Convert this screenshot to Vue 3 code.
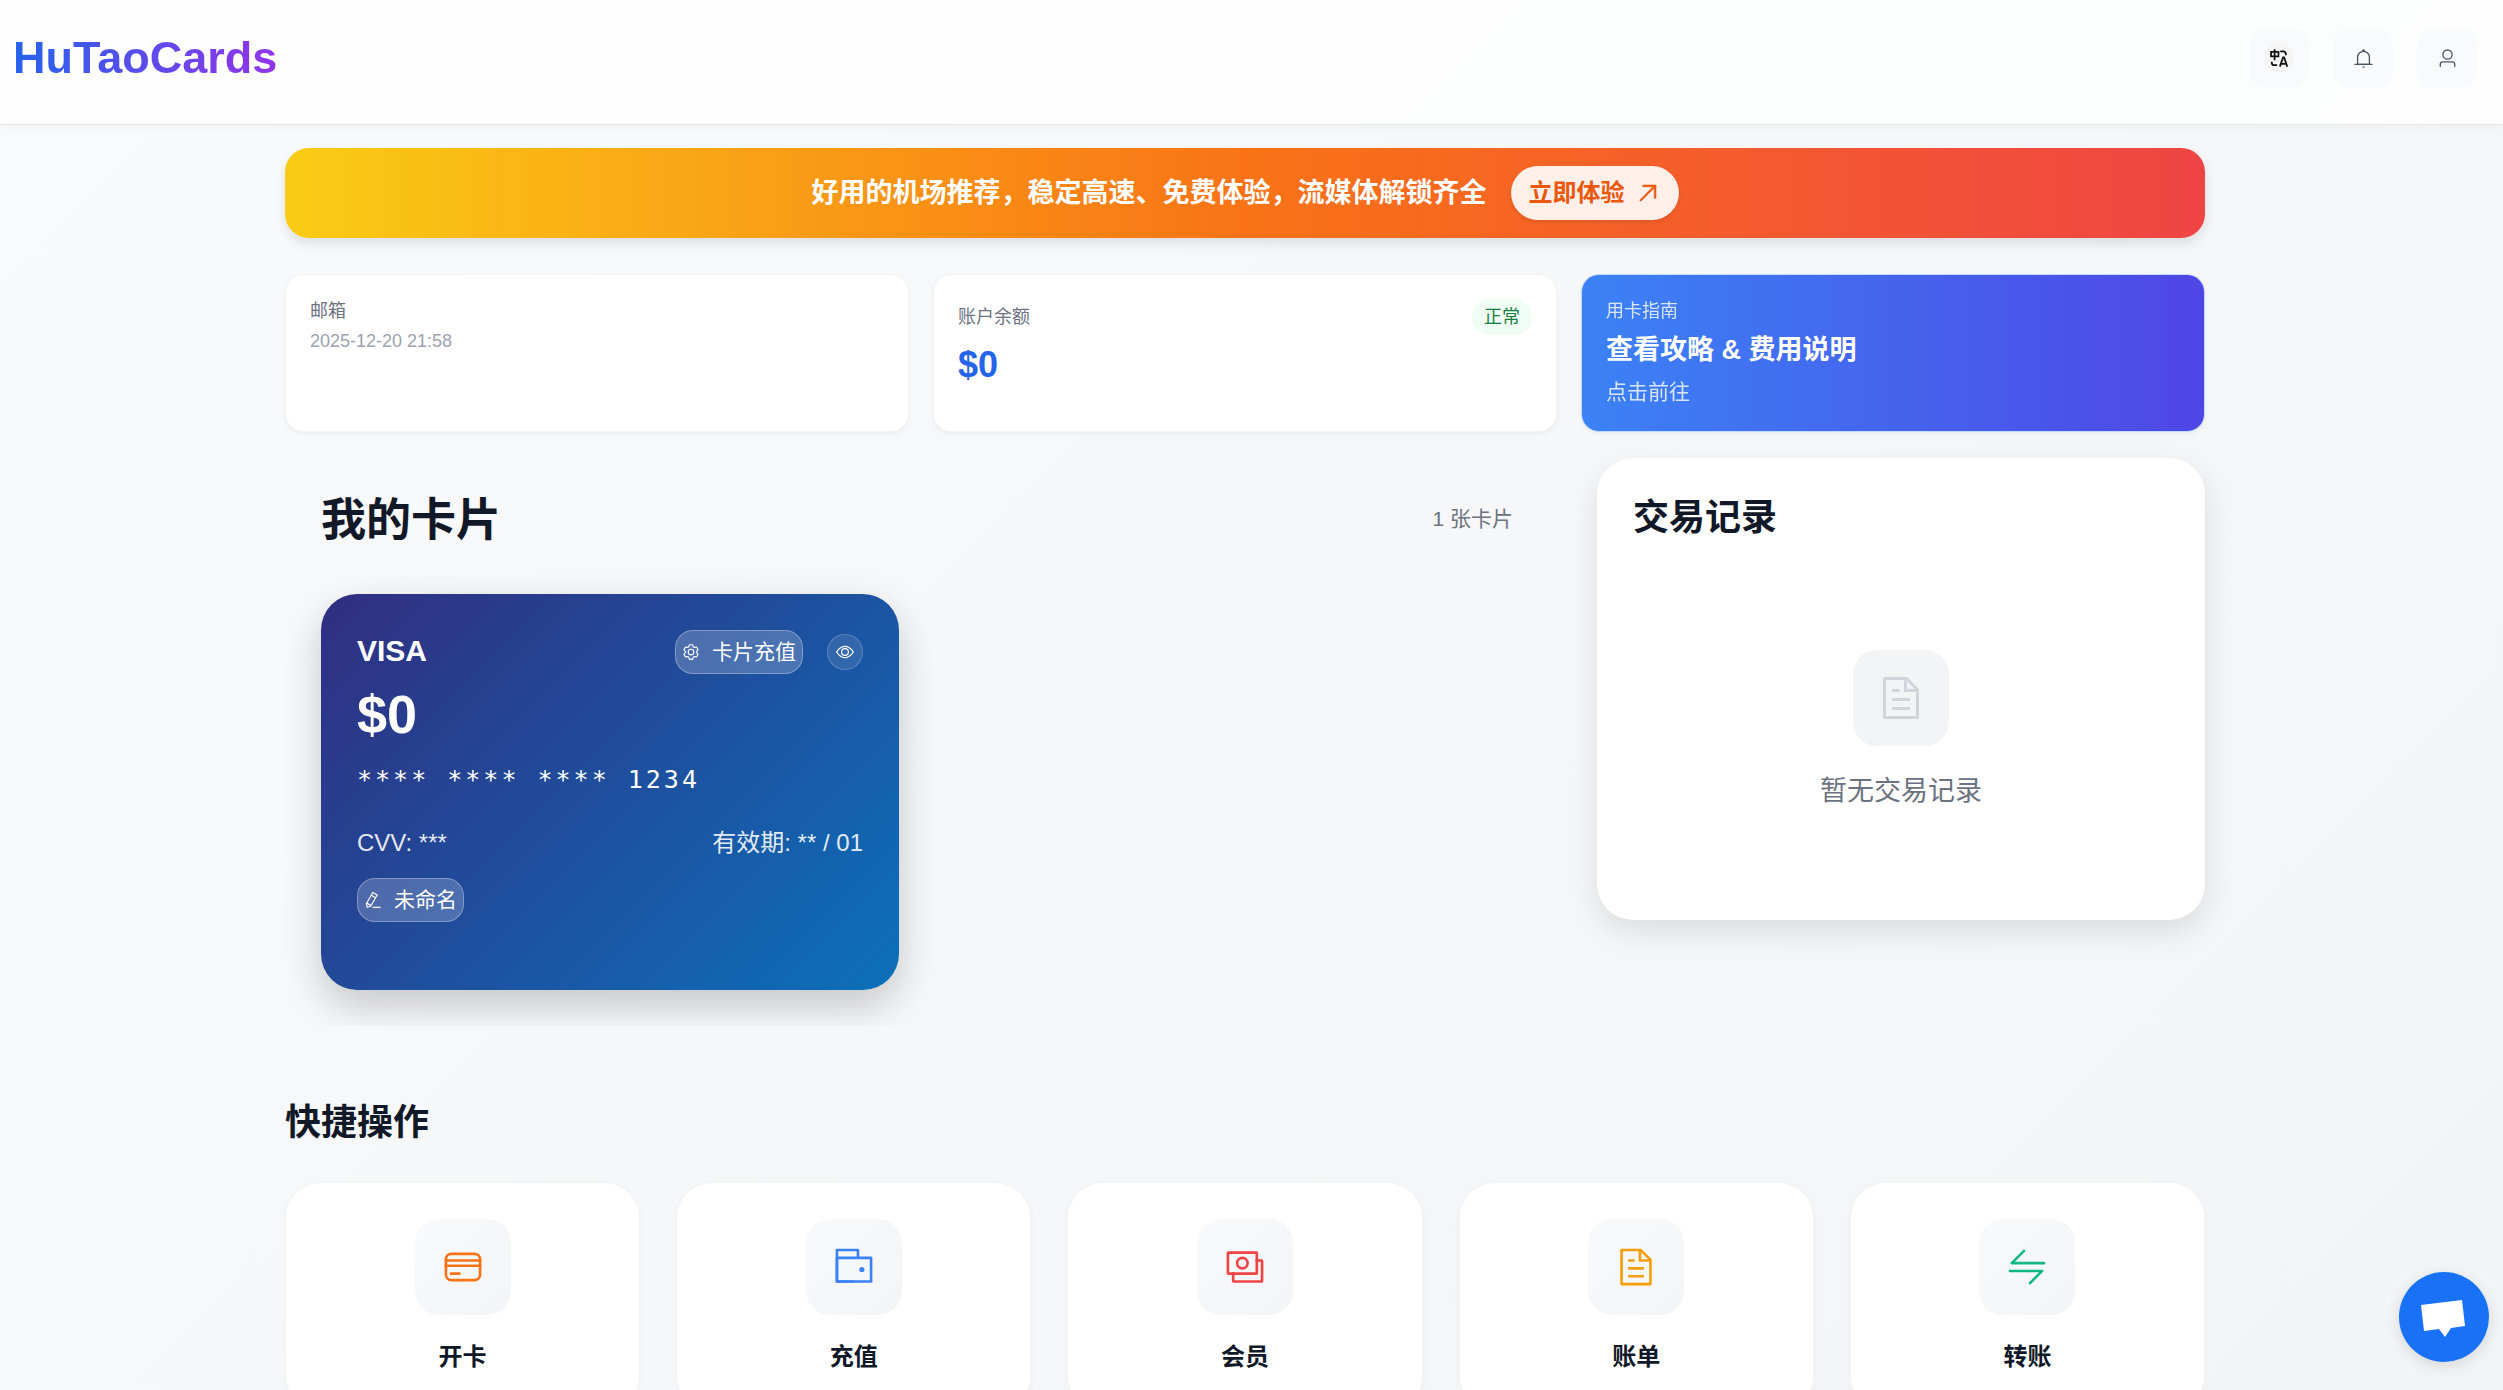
<script setup>
/**
 * App.vue
 * Card dashboard: top bar, promo banner, account summary, cards and quick actions.
 */

const card = {
  brand: 'VISA',
  balance: '$0',
  number: '**** **** **** 1234',
  cvv: '***',
  expiry: '** / 01'
}

const documentIcon = ['M832 384H576V128H192v768h640V384zm-26.496-64L640 154.496V320h165.504zM160 64h480l256 256v608a32 32 0 0 1-32 32H160a32 32 0 0 1-32-32V96a32 32 0 0 1 32-32zm160 448h384v64H320v-64zm0-192h160v64H320v-64zm0 384h384v64H320v-64z']

const actions = [
  {
    label: '开卡',
    color: '#f97316',
    paths: [
      'M228 160h568a164 164 0 0 1 164 164v376a164 164 0 0 1-164 164H228A164 164 0 0 1 64 700V324a164 164 0 0 1 164-164zm0 64a100 100 0 0 0-100 100v376a100 100 0 0 0 100 100h568a100 100 0 0 0 100-100V324a100 100 0 0 0-100-100H228z',
      'M64 320h896v64H64v-64zm0 128h896v64H64v-64zm128 192h256v64H192v-64z'
    ]
  },
  {
    label: '充值',
    color: '#3b82f6',
    paths: [
      'M640 288h-64V128H128v704h384v32a32 32 0 0 0 32 32H96a32 32 0 0 1-32-32V96a32 32 0 0 1 32-32h512a32 32 0 0 1 32 32v192z',
      'M128 320v512h768V320H128zm-32-64h832a32 32 0 0 1 32 32v576a32 32 0 0 1-32 32H96a32 32 0 0 1-32-32V288a32 32 0 0 1 32-32z',
      'M704 640a64 64 0 1 1 0-128 64 64 0 0 1 0 128z'
    ]
  },
  {
    label: '会员',
    color: '#ef4444',
    paths: [
      'M256 640v192h640V384H768v-64h152a40 40 0 0 1 40 40v496a40 40 0 0 1-40 40H232a40 40 0 0 1-40-40V640h64z',
      'M768 192H128v448h640V192zm64-24v496a40 40 0 0 1-40 40H104a40 40 0 0 1-40-40V168a40 40 0 0 1 40-40h688a40 40 0 0 1 40 40z',
      'M448 576a160 160 0 1 1 0-320 160 160 0 0 1 0 320zm0-64a96 96 0 1 0 0-192 96 96 0 0 0 0 192z'
    ]
  },
  { label: '账单', color: '#f59e0b', paths: documentIcon },
  {
    label: '转账',
    color: '#10b981',
    paths: ['M118.656 438.656a32 32 0 0 1 0-45.248L416 96l4.48-3.776A32 32 0 0 1 461.248 96l3.712 4.48a32.064 32.064 0 0 1-3.712 40.832L218.56 384H928a32 32 0 1 1 0 64H141.248a32 32 0 0 1-22.592-9.344zM64 608a32 32 0 0 1 32-32h786.752a32 32 0 0 1 22.656 54.592L608 928l-4.48 3.776a32.064 32.064 0 0 1-40.832-49.024L805.632 640H96a32 32 0 0 1-32-32z']
  }
]
</script>

<template>
  <div class="page">
    <!-- Top bar -->
    <header class="topbar">
      <a class="logo" href="#">HuTaoCards</a>
      <nav class="topbar-actions">
        <button class="icon-btn" type="button" aria-label="语言">
          <span class="lang-dot">
            <svg class="lang-icon" viewBox="0 0 51 51" fill="none" stroke="currentColor" stroke-width="5">
              <path d="M3 8h21v13H3zM13 1v31M29 7h8a8 8 0 0 1 8 8v3M5 36v3a7 7 0 0 0 7 7h8" />
              <path d="M28 50l9-26h3l9 26M32 42h13" />
            </svg>
          </span>
        </button>
        <button class="icon-btn" type="button" aria-label="通知">
          <svg class="icon-md" viewBox="0 0 1024 1024" fill="currentColor">
            <path d="M512 64a64 64 0 0 1 64 64v64H448v-64a64 64 0 0 1 64-64z" />
            <path d="M256 768h512V448a256 256 0 1 0-512 0v320zm256-640a320 320 0 0 1 320 320v384H192V448a320 320 0 0 1 320-320z" />
            <path d="M96 768h832q32 0 32 32t-32 32H96q-32 0-32-32t32-32zm352 128h128a64 64 0 0 1-128 0z" />
          </svg>
        </button>
        <button class="icon-btn" type="button" aria-label="用户">
          <svg class="icon-md" viewBox="0 0 1024 1024" fill="currentColor">
            <path d="M512 512a192 192 0 1 0 0-384 192 192 0 0 0 0 384zm0 64a256 256 0 1 1 0-512 256 256 0 0 1 0 512zm320 320v-96a96 96 0 0 0-96-96H288a96 96 0 0 0-96 96v96a32 32 0 1 1-64 0v-96a160 160 0 0 1 160-160h448a160 160 0 0 1 160 160v96a32 32 0 1 1-64 0z" />
          </svg>
        </button>
      </nav>
    </header>

    <main class="content">
      <div class="container">
        <!-- Promo banner -->
        <section class="banner">
          <span class="banner-text">好用的机场推荐，稳定高速、免费体验，流媒体解锁齐全</span>
          <a class="banner-btn" href="#">
            立即体验
            <svg class="icon-lg" viewBox="0 0 1024 1024" fill="currentColor" stroke="currentColor" stroke-width="24">
              <path d="M768 256H353.6a32 32 0 1 1 0-64H800a32 32 0 0 1 32 32v448a32 32 0 0 1-64 0V256z" />
              <path d="M777.344 201.344a32 32 0 0 1 45.312 45.312l-544 544a32 32 0 0 1-45.312-45.312l544-544z" />
            </svg>
          </a>
        </section>

        <!-- Account summary -->
        <section class="summary">
          <div class="summary-card">
            <div class="summary-label">邮箱</div>
            <div class="summary-date">2025-12-20 21:58</div>
          </div>
          <div class="summary-card">
            <div class="summary-head">
              <span class="summary-label">账户余额</span>
              <span class="status">正常</span>
            </div>
            <div class="summary-balance">$0</div>
          </div>
          <a class="summary-card guide" href="#">
            <span class="guide-label">用卡指南</span>
            <span class="guide-title">查看攻略 &amp; 费用说明</span>
            <span class="guide-link">点击前往</span>
          </a>
        </section>

        <div class="columns">
          <!-- My cards -->
          <section class="my-cards">
            <div class="my-cards-head">
              <h1>我的卡片</h1>
              <span class="card-count">1 张卡片</span>
            </div>
            <div class="card-strip">
              <article class="bank-card">
                <div class="bank-row">
                  <span class="brand">{{ card.brand }}</span>
                  <div class="bank-tools">
                    <button class="pill" type="button">
                      <svg class="icon-sm" viewBox="0 0 1024 1024" fill="currentColor">
                        <path d="M600.704 64a32 32 0 0 1 30.464 22.208l35.2 109.376c14.784 7.232 28.928 15.36 42.432 24.512l112.384-24.192a32 32 0 0 1 34.432 15.36L944.32 364.8a32 32 0 0 1-4.032 37.504l-77.12 85.12a357.12 357.12 0 0 1 0 49.024l77.12 85.248a32 32 0 0 1 4.032 37.504l-88.704 153.6a32 32 0 0 1-34.432 15.296L708.8 803.904c-13.44 9.088-27.648 17.28-42.368 24.512l-35.264 109.376A32 32 0 0 1 600.704 960H423.296a32 32 0 0 1-30.464-22.208L357.696 828.48a351.616 351.616 0 0 1-42.56-24.64l-112.32 24.256a32 32 0 0 1-34.432-15.36L79.68 659.2a32 32 0 0 1 4.032-37.504l77.12-85.248a357.12 357.12 0 0 1 0-48.896l-77.12-85.248A32 32 0 0 1 79.68 364.8l88.704-153.6a32 32 0 0 1 34.432-15.296l112.32 24.256c13.568-9.152 27.776-17.408 42.56-24.64l35.2-109.312A32 32 0 0 1 423.232 64H600.64zm-23.424 64H446.72l-36.352 113.088-24.512 11.968a294.113 294.113 0 0 0-34.816 20.096l-22.656 15.36-116.224-25.088-65.28 113.152 79.68 88.192-1.92 27.136a293.12 293.12 0 0 0 0 40.192l1.92 27.136-79.808 88.192 65.344 113.152 116.224-25.024 22.656 15.296a294.113 294.113 0 0 0 34.816 20.096l24.512 11.968L446.72 896h130.688l36.48-113.152 24.448-11.904a288.282 288.282 0 0 0 34.752-20.096l22.592-15.296 116.288 25.024 65.28-113.152-79.744-88.192 1.92-27.136a293.12 293.12 0 0 0 0-40.256l-1.92-27.136 79.808-88.128-65.344-113.152-116.288 24.96-22.592-15.232a287.616 287.616 0 0 0-34.752-20.096l-24.448-11.904L577.344 128zM512 320a192 192 0 1 1 0 384 192 192 0 0 1 0-384zm0 64a128 128 0 1 0 0 256 128 128 0 0 0 0-256z" />
                      </svg>
                      卡片充值
                    </button>
                    <button class="eye-btn" type="button" aria-label="显示卡号">
                      <svg class="icon-sm" viewBox="0 0 1024 1024" fill="currentColor">
                        <path d="M512 160c320 0 512 352 512 352S832 864 512 864 0 512 0 512s192-352 512-352zm0 64c-225.28 0-384.128 208.064-436.8 288 52.608 79.872 211.456 288 436.8 288 225.28 0 384.128-208.064 436.8-288-52.608-79.872-211.456-288-436.8-288zm0 64a224 224 0 1 1 0 448 224 224 0 0 1 0-448zm0 64a160.192 160.192 0 0 0-160 160c0 88.192 71.744 160 160 160s160-71.808 160-160-71.744-160-160-160z" />
                      </svg>
                    </button>
                  </div>
                </div>
                <div class="bank-balance">{{ card.balance }}</div>
                <div class="bank-number">{{ card.number }}</div>
                <div class="bank-row bank-meta">
                  <span>CVV: {{ card.cvv }}</span>
                  <span>有效期: {{ card.expiry }}</span>
                </div>
                <button class="pill" type="button">
                  <svg class="icon-sm" viewBox="0 0 1024 1024" fill="currentColor">
                    <path d="m199.04 672.64 193.984 112 224-387.968-193.92-112-224 388.032zm-23.872 60.16 32.896 148.288 144.896-45.696L175.168 732.8zM455.04 229.248l193.92 112 56.704-98.112-193.984-112-56.64 98.112zM104.32 708.8l384-665.024 304.768 175.936L409.152 884.8h.064l-248.448 78.336L104.32 708.8zm384 254.272v-64h448v64h-448z" />
                  </svg>
                  未命名
                </button>
              </article>
            </div>
          </section>

          <!-- Transactions -->
          <section class="records">
            <h2>交易记录</h2>
            <div class="records-empty">
              <div class="tile">
                <svg class="icon-2xl" viewBox="0 0 1024 1024" fill="currentColor">
                  <path v-for="d in documentIcon" :key="d" :d="d" />
                </svg>
              </div>
              <p>暂无交易记录</p>
            </div>
          </section>
        </div>

        <!-- Quick actions -->
        <section class="quick">
          <h2>快捷操作</h2>
          <div class="quick-grid">
            <a v-for="item in actions" :key="item.label" class="quick-card" href="#">
              <span class="tile tile-soft">
                <svg class="icon-xl" viewBox="0 0 1024 1024" :fill="item.color">
                  <path v-for="d in item.paths" :key="d" :d="d" />
                </svg>
              </span>
              <span class="quick-label">{{ item.label }}</span>
            </a>
          </div>
        </section>
      </div>
    </main>

    <!-- Support chat -->
    <button class="chat" type="button" aria-label="在线客服">
      <svg viewBox="0 0 90 90" fill="#fff">
        <path d="M22 33l41-5 3 26-14 2-6 9-6-8-15 2z" />
      </svg>
    </button>
  </div>
</template>

<style>
html { scrollbar-width: none; }
body { margin: 0; }
</style>

<style scoped>
.page {
  min-height: 100vh;
  background: linear-gradient(135deg, #f9fafb 0%, #f3f4f6 100%);
  color: #111827;
  font-family: "Liberation Sans", "Noto Sans CJK SC", sans-serif;
}
.page * { box-sizing: border-box; }
h1, h2, p { margin: 0; }
a { color: inherit; text-decoration: none; }
button { font-family: inherit; cursor: pointer; }
svg { display: block; flex-shrink: 0; }

.icon-sm { width: 18px; height: 18px; }
.icon-md { width: 21px; height: 21px; }
.icon-lg { width: 27px; height: 27px; }
.icon-xl { width: 42px; height: 42px; }
.icon-2xl { width: 48px; height: 48px; }

/* Top bar */
.topbar { display: flex; align-items: center; justify-content: space-between; padding: 28px 26px 36px 13px; background: rgba(255, 255, 255, 0.8); border-bottom: 1px solid #e5e7eb; box-shadow: 0 2px 6px rgba(0, 0, 0, 0.04); }
.logo { font-size: 45px; line-height: 54px; font-weight: 700; background: linear-gradient(90deg, #2563eb, #9333ea); -webkit-background-clip: text; background-clip: text; color: transparent; }
.topbar-actions { display: flex; gap: 24px; }
.icon-btn { display: flex; align-items: center; justify-content: center; width: 60px; height: 60px; padding: 0; border: 0; border-radius: 18px; background: #f9fafc; color: #4b5563; }
.lang-dot { display: flex; align-items: center; justify-content: center; width: 30px; height: 30px; border-radius: 50%; background: #f5f5f5; color: #111; }
.lang-icon { width: 18px; height: 18px; }

.content { padding: 23px 13px 36px 0; }
.container { max-width: 1920px; margin: 0 auto; }

/* Promo banner */
.banner { display: flex; align-items: center; justify-content: center; gap: 24px; padding: 18px 24px; border-radius: 24px; background: linear-gradient(90deg, #facc15, #f97316, #ef4444); box-shadow: 0 6px 12px rgba(0, 0, 0, 0.1); }
.banner-text { font-size: 27px; line-height: 42px; font-weight: 700; color: #fff; }
.banner-btn { display: flex; align-items: center; gap: 9px; padding: 9px 18px; border-radius: 27px; background: rgba(255, 255, 255, 0.9); color: #ea580c; font-size: 24px; line-height: 36px; font-weight: 700; box-shadow: 0 2px 4px rgba(0, 0, 0, 0.1); }

/* Account summary */
.summary { display: grid; grid-template-columns: repeat(3, 1fr); gap: 24px; margin-top: 36px; }
.summary-card { padding: 24px; border: 1px solid #f3f4f6; border-radius: 18px; background: #fff; box-shadow: 0 2px 4px rgba(0, 0, 0, 0.05); }
.summary-head { display: flex; align-items: center; justify-content: space-between; margin-bottom: 6px; }
.summary-label { font-size: 18px; line-height: 24px; color: #6b7280; }
.summary-date { margin-top: 6px; font-size: 18px; line-height: 24px; color: #9ca3af; }
.summary-balance { font-size: 36px; line-height: 48px; font-weight: 700; color: #2563eb; }
.status { padding: 6px 12px; border-radius: 18px; background: #f0fdf4; color: #15803d; font-size: 18px; line-height: 24px; }
.guide { display: flex; flex-direction: column; gap: 6px; border-color: #bfdbfe; background: linear-gradient(90deg, #3b82f6, #4f46e5); color: #fff; }
.guide-label { font-size: 18px; line-height: 24px; opacity: 0.8; }
.guide-title { font-size: 27px; line-height: 42px; font-weight: 700; }
.guide-link { font-size: 21px; line-height: 30px; opacity: 0.8; }

/* Two thirds for cards, one third for records */
.columns { display: grid; grid-template-columns: repeat(3, 1fr); gap: 48px; align-items: start; margin-top: 26px; }
.my-cards { grid-column: span 2; padding: 36px 36px 0; }
.my-cards-head { display: flex; align-items: center; justify-content: space-between; }
.my-cards-head h1 { font-size: 45px; line-height: 54px; }
.card-count { font-size: 21px; line-height: 28px; padding-bottom: 4px; color: #6b7280; }
.card-strip { display: grid; grid-template-columns: repeat(2, 1fr); gap: 36px; margin: 0 -36px; padding: 46px 36px 36px; overflow: hidden; }

/* Bank card */
.bank-card { display: flex; flex-direction: column; align-items: flex-start; min-height: 396px; padding: 36px; border-radius: 36px; background: linear-gradient(135deg, #312e81, #0c70ba); color: #fff; box-shadow: 0 16px 40px rgba(0, 0, 0, 0.2); }
.bank-row { display: flex; align-items: flex-start; justify-content: space-between; width: 100%; }
.brand { font-size: 30px; line-height: 42px; font-weight: 700; }
.bank-tools { display: flex; align-items: center; gap: 24px; }
.pill { display: flex; align-items: center; gap: 12px; padding: 6px; border: 1px solid rgba(255, 255, 255, 0.3); border-radius: 18px; background: rgba(255, 255, 255, 0.2); color: #fff; font-size: 21px; line-height: 30px; }
.eye-btn { display: flex; align-items: center; justify-content: center; width: 36px; height: 36px; padding: 0; border: 1px solid rgba(255, 255, 255, 0.2); border-radius: 50%; background: rgba(255, 255, 255, 0.1); color: #fff; }
.bank-balance { margin-top: 10px; font-size: 54px; line-height: 60px; font-weight: 700; }
.bank-number { margin-top: 18px; font-family: "DejaVu Sans Mono", monospace; font-size: 25px; line-height: 36px; letter-spacing: 3px; }
.bank-meta { margin: 27px 0 17px; font-size: 24px; line-height: 36px; color: rgba(255, 255, 255, 0.9); }

/* Transactions */
.records { padding: 36px; border-radius: 36px; background: #fff; box-shadow: 0 12px 30px rgba(0, 0, 0, 0.1); }
.records h2, .quick h2 { font-size: 36px; line-height: 48px; }
.records-empty { display: flex; flex-direction: column; align-items: center; gap: 24px; padding: 108px 0 72px; font-size: 27px; line-height: 42px; color: #6b7280; }
.tile { display: flex; align-items: center; justify-content: center; width: 96px; height: 96px; border-radius: 24px; background: #f3f4f6; color: #d1d5db; }
.tile-soft { background: linear-gradient(135deg, #f9fafb, #f3f4f6); }

/* Quick actions */
.quick { margin-top: 73px; }
.quick-grid { display: grid; grid-template-columns: repeat(5, 1fr); gap: 36px; margin-top: 35px; }
.quick-card { display: flex; flex-direction: column; align-items: center; gap: 24px; padding: 36px; border: 1px solid #f3f4f6; border-radius: 36px; background: #fff; box-shadow: 0 2px 6px rgba(0, 0, 0, 0.03); }
.quick-label { font-size: 24px; line-height: 36px; font-weight: 700; }

/* Floats over the page in the bottom corner */
.chat { position: fixed; right: 14px; bottom: 28px; width: 90px; height: 90px; padding: 0; border: 0; border-radius: 50%; background: #1972f5; box-shadow: 0 4px 16px rgba(0, 0, 0, 0.12); }
</style>
